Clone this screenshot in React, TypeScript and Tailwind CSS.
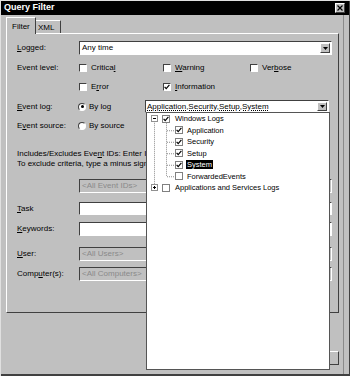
import React from "react";

const font = { fontFamily: '"Liberation Sans", Arial, sans-serif' };

function CheckMark({ className = "" }: { className?: string }) {
  return (
    <svg viewBox="0 0 6 6" className={`w-[6px] h-[6px] ${className}`}>
      <polyline points="0.6,2.8 2.2,4.6 5.4,0.8" fill="none" stroke="#000" strokeWidth="1.2" />
    </svg>
  );
}

function CheckBox({ checked }: { checked?: boolean }) {
  return (
    <span className="flex items-center justify-center w-[8px] h-[8px] shrink-0 bg-white border border-t-[#404040] border-l-[#404040] border-b-white border-r-white">
      {checked && <CheckMark />}
    </span>
  );
}

function Radio({ checked }: { checked?: boolean }) {
  return (
    <span className="flex items-center justify-center w-[8px] h-[8px] shrink-0 rounded-full bg-white border border-t-[#404040] border-l-[#404040] border-b-white border-r-white">
      {checked && <span className="w-[3px] h-[3px] rounded-full bg-black" />}
    </span>
  );
}

function Arrow() {
  return (
    <span className="flex items-center justify-center w-[10px] h-full bg-[#c0c0c0] border border-t-white border-l-white border-b-[#404040] border-r-[#404040]">
      <svg viewBox="0 0 5 3" className="w-[5px] h-[3px]">
        <polygon points="0,0 5,0 2.5,3" fill="#000" />
      </svg>
    </span>
  );
}

function Label({ pre = "", u, post = "" }: { pre?: string; u: string; post?: string }) {
  return (
    <span className="whitespace-nowrap">
      {pre}
      <span className="underline">{u}</span>
      {post}
    </span>
  );
}

function Field({ value, disabled, height = "h-[14px]" }: { value?: string; disabled?: boolean; height?: string }) {
  return (
    <div
      className={`w-[253px] ${height} flex items-center pl-[2px] border border-t-[#404040] border-l-[#404040] border-b-white border-r-white ${
        disabled ? "bg-[#c0c0c0] text-[#8a8a8a]" : "bg-white"
      }`}
    >
      {value}
    </div>
  );
}

function TreeBox({ checked }: { checked?: boolean }) {
  return (
    <span className="flex items-center justify-center w-[8px] h-[8px] shrink-0 bg-white border border-[#808080]">
      {checked && <CheckMark className="w-[5px] h-[5px]" />}
    </span>
  );
}

function Expander({ open }: { open?: boolean }) {
  return (
    <span className="relative flex items-center justify-center w-[7px] h-[7px] shrink-0 bg-white border border-[#909090]">
      <span className="w-[3px] h-px bg-black" />
      {!open && <span className="absolute w-px h-[3px] bg-black" />}
    </span>
  );
}

const children = [
  { name: "Application", checked: true },
  { name: "Security", checked: true },
  { name: "Setup", checked: true },
  { name: "System", checked: true, selected: true },
  { name: "ForwardedEvents", checked: false },
];

function LogTree() {
  const c = (i: number) => 5.75 + i * 11.5;
  return (
    <div className="absolute left-[146px] top-[112px] w-[184px] h-[258px] bg-white border border-[#555] text-[7.5px]">
      <svg className="absolute left-0 top-0" width="182" height="90">
        <g stroke="#8c8c8c" strokeWidth="1" strokeDasharray="1 1" fill="none">
          <line x1="7.5" y1={c(0) + 4} x2="7.5" y2={c(6) - 4} />
          <line x1="19.5" y1={c(0) + 4} x2="19.5" y2={c(5)} />
          {[1, 2, 3, 4, 5].map((i) => (
            <line key={i} x1="20" y1={c(i) + 0.5} x2="28" y2={c(i) + 0.5} />
          ))}
        </g>
      </svg>
      <div className="relative">
        <div className="h-[11.5px] flex items-center pl-[4px]">
          <Expander open />
          <span className="ml-[4px]">
            <TreeBox checked />
          </span>
          <span className="ml-[5px]">Windows Logs</span>
        </div>
        {children.map((ch) => (
          <div key={ch.name} className="h-[11.5px] flex items-center pl-[28px]">
            <TreeBox checked={ch.checked} />
            {ch.selected ? (
              <span className="ml-[3px] px-[1px] bg-black text-white leading-[9px]">{ch.name}</span>
            ) : (
              <span className="ml-[4px]">{ch.name}</span>
            )}
          </div>
        ))}
        <div className="h-[11.5px] flex items-center pl-[4px]">
          <Expander />
          <span className="ml-[4px]">
            <TreeBox />
          </span>
          <span className="ml-[5px]">Applications and Services Logs</span>
        </div>
      </div>
    </div>
  );
}

export default function App() {
  return (
    <div
      style={font}
      className="relative w-[350px] h-[376px] overflow-hidden bg-[#c0c0c0] text-black text-[8px] shadow-[inset_1px_1px_0_#e0e0e0,inset_-1px_-2px_0_#404040,inset_-6px_0_0_#c0c0c0,inset_-7px_0_0_#8a8a8a]"
    >
      {/* title bar */}
      <div className="mx-[1px] mt-[1px] h-[14px] bg-black flex items-center justify-between pl-[3px] pr-[4px]">
        <span className="text-white font-bold text-[9px]">Query Filter</span>
        <span className="flex items-center justify-center w-[10px] h-[10px] bg-[#c0c0c0] border border-t-white border-l-white border-b-[#404040] border-r-[#404040]">
          <svg viewBox="0 0 6 6" className="w-[6px] h-[6px]">
            <path d="M0.5 0.5 L5.5 5.5 M5.5 0.5 L0.5 5.5" stroke="#000" strokeWidth="1.2" />
          </svg>
        </span>
      </div>

      <div className="ml-[6px] w-[333px] mt-[2px]">
        {/* tabs */}
        <div className="h-[17px] flex items-end">
          <div className="relative z-10 w-[30px] h-[17px] pl-[5px] pt-[3px] bg-[#c0c0c0] border-t border-l border-r border-t-white border-l-white border-r-[#404040]">
            Filter
          </div>
          <div className="w-[25px] h-[13px] mb-[1px] pl-[2px] pt-[1px] border-t border-r border-t-white border-r-[#404040]">
            XML
          </div>
        </div>

        {/* panel */}
        <div className="-mt-[1px] h-[280px] overflow-hidden border border-t-white border-l-white border-b-[#404040] border-r-[#404040] pl-[10px]">
          <div className="mt-[7px] h-[14px] flex items-center">
            <span className="w-[62px]">
              <Label u="L" post="ogged:" />
            </span>
            <div className="w-[253px] h-[14px] flex items-center justify-between bg-white p-px pl-[2px] border border-t-[#404040] border-l-[#404040] border-b-white border-r-white">
              <span>Any time</span>
              <Arrow />
            </div>
          </div>

          <div className="mt-[6px] h-[14px] flex items-center">
            <span className="w-[62px]">Event level:</span>
            <span className="w-[84px] flex items-center gap-[4px]">
              <CheckBox />
              <Label pre="Critica" u="l" />
            </span>
            <span className="w-[87px] flex items-center gap-[4px]">
              <CheckBox />
              <Label u="W" post="arning" />
            </span>
            <span className="flex items-center gap-[4px]">
              <CheckBox />
              <Label pre="Ver" u="b" post="ose" />
            </span>
          </div>
          <div className="mt-[5px] h-[14px] flex items-center">
            <span className="w-[62px]" />
            <span className="w-[84px] flex items-center gap-[4px]">
              <CheckBox />
              <Label pre="E" u="r" post="ror" />
            </span>
            <span className="flex items-center gap-[4px]">
              <CheckBox checked />
              <Label u="I" post="nformation" />
            </span>
          </div>

          <div className="mt-[6px] h-[13px] flex items-center">
            <span className="w-[62px]">
              <Label u="E" post="vent log:" />
            </span>
            <span className="w-[67px] -ml-px flex items-center gap-[3px]">
              <Radio checked />
              By log
            </span>
            <div className="w-[184px] h-[13px] flex items-center justify-between bg-white p-px border border-t-[#404040] border-l-[#404040] border-b-white border-r-white">
              <span className="underline decoration-dotted">Application,Security,Setup,System</span>
              <Arrow />
            </div>
          </div>

          <div className="mt-[6px] h-[14px] flex items-center">
            <span className="w-[62px]">
              <Label pre="E" u="v" post="ent source:" />
            </span>
            <span className="-ml-px flex items-center gap-[3px]">
              <Radio />
              By source
            </span>
          </div>

          {/* the open log list covers the rest of these two lines */}
          <div className="mt-[16px] w-[129px] overflow-hidden leading-[10px] whitespace-nowrap">
            <div>
              Includes/Excludes Eve<span className="underline">n</span>t IDs: Enter ID
            </div>
            <div>To exclude criteria, type a minus sign</div>
          </div>

          <div className="mt-[10px] h-[14px] flex items-center">
            <span className="w-[62px]" />
            <Field value="<All Event IDs>" disabled />
          </div>

          <div className="mt-[9px] h-[13px] flex items-center">
            <span className="w-[62px]">
              <Label u="T" post="ask" />
            </span>
            <Field height="h-[13px]" />
          </div>
          <div className="mt-[7px] h-[14px] flex items-center">
            <span className="w-[62px]">
              <Label u="K" post="eywords:" />
            </span>
            <Field />
          </div>
          <div className="mt-[11px] h-[14px] flex items-center">
            <span className="w-[62px]">
              <Label u="U" post="ser:" />
            </span>
            <Field value="<All Users>" disabled />
          </div>
          <div className="mt-[6px] h-[14px] flex items-center">
            <span className="w-[62px]">
              <Label pre="Comp" u="u" post="ter(s):" />
            </span>
            <Field value="<All Computers>" disabled />
          </div>
        </div>

        {/* buttons */}
        <div className="mt-[38px] flex justify-end gap-[6px]">
          {["OK", "Cancel"].map((b) => (
            <span
              key={b}
              className="w-[56px] h-[14px] flex items-center justify-center border border-t-white border-l-white border-b-[#404040] border-r-[#404040]"
            >
              {b}
            </span>
          ))}
        </div>
      </div>

      <LogTree />
    </div>
  );
}
